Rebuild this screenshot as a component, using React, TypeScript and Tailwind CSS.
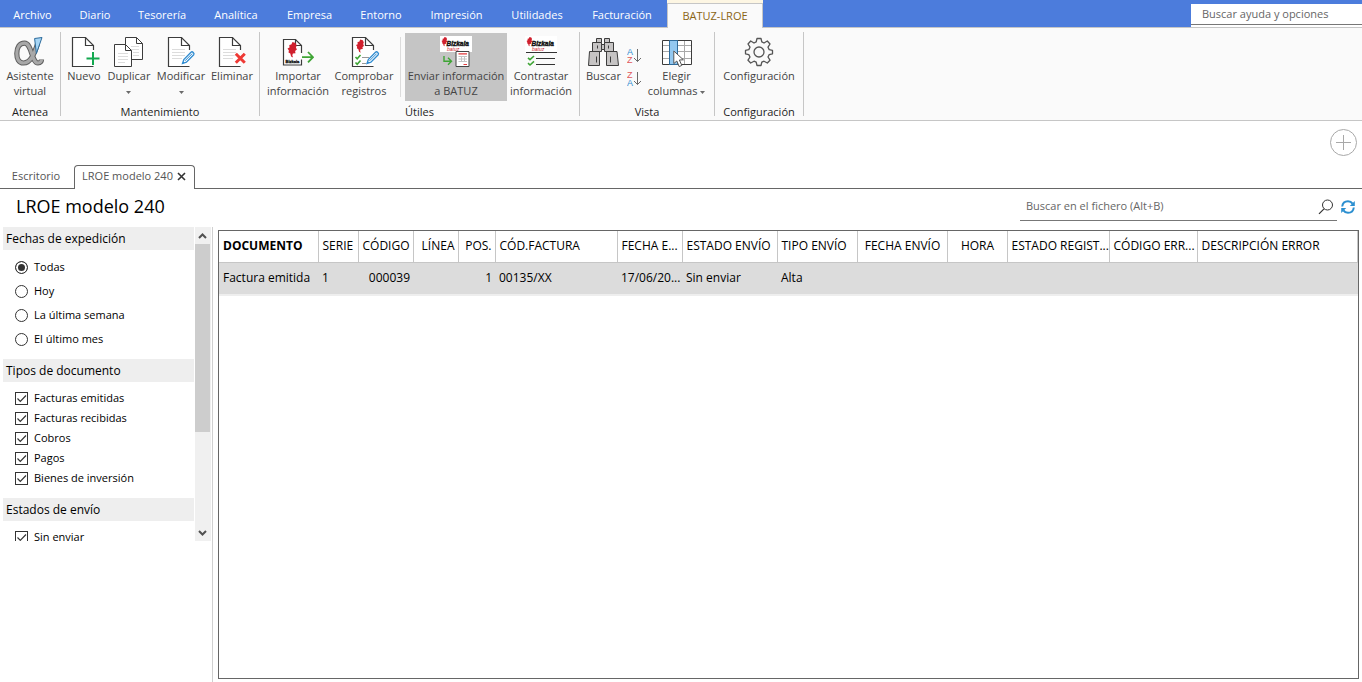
import type { ReactNode } from "react";

const menuTabs = [
  { label: "Archivo", width: "w-[65px]" },
  { label: "Diario", width: "w-[60px]" },
  { label: "Tesorería", width: "w-[74px]" },
  { label: "Analítica", width: "w-[74px]" },
  { label: "Empresa", width: "w-[73px]" },
  { label: "Entorno", width: "w-[70px]" },
  { label: "Impresión", width: "w-[81px]" },
  { label: "Utilidades", width: "w-[80px]" },
  { label: "Facturación", width: "w-[90px]" },
];

const dateFilters = ["Todas", "Hoy", "La última semana", "El último mes"];

const documentTypes = [
  "Facturas emitidas",
  "Facturas recibidas",
  "Cobros",
  "Pagos",
  "Bienes de inversión",
];

const columns = [
  { label: "DOCUMENTO", value: "Factura emitida", width: "w-[99px]", align: "text-left", bold: true },
  { label: "SERIE", value: "1", width: "w-[40px]", align: "text-left" },
  { label: "CÓDIGO", value: "000039", width: "w-[55px]", align: "text-right" },
  { label: "LÍNEA", value: "", width: "w-[45px]", align: "text-right" },
  { label: "POS.", value: "1", width: "w-[37px]", align: "text-right" },
  { label: "CÓD.FACTURA", value: "00135/XX", width: "w-[122px]", align: "text-left" },
  { label: "FECHA E...", value: "17/06/20...", width: "w-[65px]", align: "text-left" },
  { label: "ESTADO ENVÍO", value: "Sin enviar", width: "w-[95px]", align: "text-left" },
  { label: "TIPO ENVÍO", value: "Alta", width: "w-[80px]", align: "text-left" },
  { label: "FECHA ENVÍO", value: "", width: "w-[90px]", align: "text-center" },
  { label: "HORA", value: "", width: "w-[60px]", align: "text-center" },
  { label: "ESTADO REGIST...", value: "", width: "w-[102px]", align: "text-left" },
  { label: "CÓDIGO ERR...", value: "", width: "w-[88px]", align: "text-right" },
  { label: "DESCRIPCIÓN ERROR", value: "", width: "", align: "text-left" },
];

function Icon({ children }: { children: ReactNode }) {
  return (
    <svg width="32" height="32" viewBox="0 0 32 32" fill="none" className="shrink-0" aria-hidden="true">
      {children}
    </svg>
  );
}

function TextLines({ x = 8, y = 13, w = 13 }: { x?: number; y?: number; w?: number }) {
  return (
    <path
      d={`M${x} ${y + 0.5}h${w}m-${w} 3h${w}m-${w} 3h${w}m-${w} 3h${w - 3}`}
      stroke="#dcdcdc"
    />
  );
}

function Pencil({ x, y }: { x: number; y: number }) {
  return (
    <g transform={`translate(${x} ${y})`}>
      <path d="M0.5 12.5L1.8 8.6 9 1.2C10.4 0 12.8 2.2 11.7 3.8L4.4 11.2Z" fill="#fff" stroke="#2f8bd0" strokeWidth="1.3" />
      <path d="M3 9.8L10.2 2.6" stroke="#2f8bd0" />
      <path d="M0.5 12.5L1.2 10.2 2.8 11.8Z" fill="#2f8bd0" />
    </g>
  );
}

function Page({ x = 4 }: { x?: number }) {
  return (
    <g transform={`translate(${x} 0)`}>
      <path d="M21.5 30.5H0.5V1.5H13.5L21.5 9.5V14" fill="#fff" stroke="#3c3c3c" strokeWidth="1.2" />
      <path d="M13.5 1.5V9.5H21.5" stroke="#3c3c3c" strokeWidth="1.2" />
    </g>
  );
}

// Red map mark used by the Bizkaia icons
function Region({ x, y, scale = 1 }: { x: number; y: number; scale?: number }) {
  return (
    <g transform={`translate(${x} ${y}) scale(${scale})`}>
      <path
        d="M5 0L8 1 9.2 3.5 8.4 5.4 9.4 7.4 7.6 9 8 11.2 5.4 11.5 4.8 13.2 5.6 15.6 3.6 14.4 2.8 11.6 1 10.4 1.4 8.4 0 6.6 2 5.6 1.8 3 3.8 2.6Z"
        fill="#d0202e"
      />
    </g>
  );
}

function Banner() {
  return (
    <>
      <rect width="32" height="16" fill="#fff" />
      <Region x={1.5} y={1} scale={0.6} />
      <text x="6.5" y="9.5" fontSize="6.5" fontWeight="700" fontStyle="italic" fill="#111" stroke="#111" strokeWidth="0.4" fontFamily="Liberation Sans, sans-serif">
        Bizkaia
      </text>
      <text x="7" y="14.5" fontSize="5" fontStyle="italic" fill="#d0202e" fontFamily="Liberation Sans, sans-serif">
        batuz
      </text>
    </>
  );
}

function AlphaIcon() {
  const alpha = "M23.5 8C20.5 17 17 27 9.5 27C4.5 27 2.8 22.5 2.8 17.5C2.8 11.5 5.5 7.2 10.5 7.2C18 7.2 17.5 27 24 27C26.5 27 27.5 25 27.5 23.5";
  return (
    <Icon>
      <path d={alpha} stroke="#5f5f5f" strokeWidth="5.2" />
      <path d={alpha} stroke="#a8a8a8" strokeWidth="3.2" />
      <path d="M20.6 2.5L28 1.5 22.4 17.5Z" fill="#a6d5f5" stroke="#2d6c9c" />
    </Icon>
  );
}

function NewIcon() {
  return (
    <Icon>
      <Page />
      <path d="M25 16V29M18.5 22.5H31.5" stroke="#12a84f" strokeWidth="2" />
    </Icon>
  );
}

function DuplicateIcon() {
  return (
    <Icon>
      <path d="M12.5 1.5H23.5L29.5 7.5V23.5H12.5Z" fill="#fff" stroke="#3c3c3c" />
      <path d="M23.5 1.5V7.5H29.5" stroke="#3c3c3c" />
      <path d="M18 10.5H26M18 13.5H26M20 16.5H26M20 19.5H26" stroke="#dcdcdc" />
      <path d="M1.5 8.5H12.5L18.5 14.5V30.5H1.5Z" fill="#fff" stroke="#3c3c3c" />
      <path d="M12.5 8.5V14.5H18.5" stroke="#3c3c3c" />
      <TextLines x={5} y={17} w={10} />
    </Icon>
  );
}

function EditIcon() {
  return (
    <Icon>
      <Page x={3} />
      <TextLines x={7} />
      <Pencil x={17} y={15} />
    </Icon>
  );
}

function DeleteIcon() {
  return (
    <Icon>
      <Page x={3} />
      <TextLines x={7} />
      <path d="M19.5 17.5L29 27M29 17.5L19.5 27" stroke="#fff" strokeWidth="4" />
      <path d="M19.8 17.8L28.8 26.8M28.8 17.8L19.8 26.8" stroke="#ee3a35" strokeWidth="3" />
    </Icon>
  );
}

function ImportIcon() {
  return (
    <Icon>
      <path d="M19.5 23.5V29H1.5V3.5H13.5L19.5 9.5V17" fill="#fff" stroke="#3c3c3c" strokeWidth="1.2" />
      <path d="M13.5 3.5V9.5H19.5" stroke="#3c3c3c" strokeWidth="1.2" />
      <Region x={5.5} y={6} />
      <text x="3.5" y="26.5" fontSize="4" fontWeight="700" fill="#111" stroke="#111" strokeWidth="0.3" fontFamily="Liberation Sans, sans-serif">
        Bizkaia
      </text>
      <path d="M20 21.2H31M26 16L31 21.2L26 26.4" stroke="#3fa535" strokeWidth="1.8" />
    </Icon>
  );
}

function CheckIcon() {
  return (
    <Icon>
      <Page />
      <Region x={8} y={3.5} scale={0.85} />
      <path d="M7.5 21L9.2 22.8 12.5 19M7.5 26.5L9.2 28.3 12.5 24.5" stroke="#3fa535" strokeWidth="1.6" />
      <path d="M14 21.5H21M14 27.5H18" stroke="#999" />
      <Pencil x={18.5} y={15} />
    </Icon>
  );
}

function SendIcon() {
  return (
    <Icon>
      <Banner />
      <path d="M4 20V25.3H11M8 21.8L11.5 25.3L8 28.8" stroke="#3fa535" strokeWidth="1.4" />
      <path d="M16 15.5H29V30.5H16Z" fill="#fff" stroke="#444" />
      <path d="M18.5 17.8H27M23.5 28.5H27" stroke="#e2383a" strokeWidth="1.2" />
      <path d="M18.5 20.5H27M18.5 23H27M18.5 25.5H27M21.5 20V26M24.5 20V26" stroke="#c4c4c4" />
    </Icon>
  );
}

function ContrastIcon() {
  return (
    <Icon>
      <Banner />
      <path d="M1 16.5H32M11 22.5H30M11 28.5H30" stroke="#333" />
      <path d="M3 21.8L5 23.6 9 20M3 27.2L5 29 9 25.4" stroke="#3fa535" strokeWidth="1.6" />
    </Icon>
  );
}

function BinocularsIcon() {
  return (
    <Icon>
      <g fill="#c6c4c4" stroke="#3c3c3c">
        <path d="M8.5 2.5H13.5V6.5H8.5ZM16.5 2.5H21.5V6.5H16.5Z" />
        <path d="M4.5 6.5H13.5V15.5H4.5ZM16.5 6.5H25.5V15.5H16.5Z" />
        <path d="M13.5 8.5H16.5V13.5H13.5Z" />
        <path d="M1.5 15.5H11.5V29.5H0.5ZM18.5 15.5H29L30.5 29.5H18.5Z" />
        <path d="M8.5 20.5V26.5M22.5 20.5V26.5M9.5 9.5V12.5M20.5 9.5V12.5" />
      </g>
    </Icon>
  );
}

function ColumnsIcon() {
  return (
    <Icon>
      <path d="M1.5 4.5H30.5V28.5H1.5Z" fill="#fff" />
      <path d="M1 9.5H31M1 15.5H31M1 22.5H31M23.5 4V29" stroke="#a9a9a9" />
      <path d="M1.5 4.5H30.5V28.5H1.5Z" stroke="#3c3c3c" />
      <path d="M8.5 4.5H16.5V28.5H8.5Z" fill="#93c8f0" stroke="#2f6c9c" />
      <path d="M12.8 15V27.6L15.8 25 18.2 30.6 20.8 29.4 18.4 24 22.4 23.8Z" fill="#fff" stroke="#555" />
    </Icon>
  );
}

function GearIcon() {
  return (
    <Icon>
      <path
        d="M13.2 5.9L14 2.5H18L18.8 5.9L21 7L24.3 5L27 8L25 11.2L26.2 13.6L29.5 14.4V17.8L26.2 18.6L25 21L27 24.2L24.3 27L21 25.2L18.8 26.2L18 29.5H14L13.2 26.2L11 25.2L7.7 27L5 24.2L7 21L5.8 18.6L2.5 17.8V14.4L5.8 13.6L7 11.2L5 8L7.7 5L11 7Z"
        stroke="#555"
        strokeWidth="1.3"
        strokeLinejoin="round"
      />
      <circle cx="16" cy="16" r="5" stroke="#555" strokeWidth="1.3" />
    </Icon>
  );
}

function SortIcon({ first, second, firstColor, secondColor }: { first: string; second: string; firstColor: string; secondColor: string }) {
  return (
    <svg width="16" height="17" viewBox="0 0 16 17" fill="none" aria-hidden="true">
      <g fontFamily="Liberation Sans, sans-serif" fontSize="9">
        <text x="0" y="8" fill={firstColor}>{first}</text>
        <text x="0" y="16" fill={secondColor}>{second}</text>
      </g>
      <path d="M10.5 2V14.5M7 11L10.5 14.5L14 11" stroke="#6a6a6a" />
    </svg>
  );
}

function Caret() {
  return (
    <svg width="5" height="3" viewBox="0 0 5 3" className="inline-block align-middle" aria-hidden="true">
      <path d="M0 0H5L2.5 3Z" fill="#6a6a6a" />
    </svg>
  );
}

interface RibbonButtonProps {
  icon: ReactNode;
  width: string;
  active?: boolean;
  children: ReactNode;
}

function RibbonButton({ icon, width, active, children }: RibbonButtonProps) {
  return (
    <button
      type="button"
      className={`flex h-[68px] shrink-0 flex-col items-center pt-[3px] whitespace-nowrap text-[#444] ${width} ${
        active ? "bg-[#c5c5c5]" : ""
      }`}
    >
      {icon}
      <span className="block text-center leading-[15px]">{children}</span>
    </button>
  );
}

function RibbonGroup({ label, children }: { label: string; children: ReactNode }) {
  return (
    <section className="my-1 flex shrink-0 flex-col border-r border-[#c6c6c6]">
      <div className="flex pt-px">{children}</div>
      <h2 className="mt-[3px] text-center leading-[15px] text-[#1e1e1e]">{label}</h2>
    </section>
  );
}

function FilterHeading({ children }: { children: ReactNode }) {
  return <legend className="block h-[23px] w-full bg-[#eee] pl-[3px] text-[12px] leading-[23px]">{children}</legend>;
}

function CheckOption({ label }: { label: string }) {
  return (
    <label className="flex h-5 items-center gap-1.5">
      <span className="relative flex size-[13px]">
        <input type="checkbox" defaultChecked className="size-[13px] appearance-none border border-[#333] bg-white" />
        <svg viewBox="0 0 13 13" fill="none" className="pointer-events-none absolute inset-0" aria-hidden="true">
          <path d="M2.5 6.5L5.3 9.3L11 3.5" stroke="#333" strokeWidth="1.2" />
        </svg>
      </span>
      {label}
    </label>
  );
}

function Ribbon() {
  return (
    <div className="flex h-[93px] border-b border-[#c6c6c6] bg-[#fafafa]">
      <RibbonGroup label="Atenea">
        <RibbonButton icon={<AlphaIcon />} width="w-[60px]">
          Asistente
          <br />
          virtual
        </RibbonButton>
      </RibbonGroup>
      <RibbonGroup label="Mantenimiento">
        <div className="flex pr-1.5">
          <RibbonButton icon={<NewIcon />} width="w-[46px]">
            Nuevo
          </RibbonButton>
          <RibbonButton icon={<DuplicateIcon />} width="w-[44px]">
            Duplicar
            <br />
            <Caret />
          </RibbonButton>
          <RibbonButton icon={<EditIcon />} width="w-[60px]">
            Modificar
            <br />
            <Caret />
          </RibbonButton>
          <RibbonButton icon={<DeleteIcon />} width="w-[42px]">
            Eliminar
          </RibbonButton>
        </div>
      </RibbonGroup>
      <RibbonGroup label="Útiles">
        <div className="flex pr-1 pl-1">
          <RibbonButton icon={<ImportIcon />} width="w-[68px]">
            Importar
            <br />
            información
          </RibbonButton>
          <RibbonButton icon={<CheckIcon />} width="w-[64px]">
            Comprobar
            <br />
            registros
          </RibbonButton>
          <div className="mx-1 my-1 w-px bg-[#dcdcdc]" />
          <RibbonButton icon={<SendIcon />} width="w-[102px]" active>
            Enviar información
            <br />a BATUZ
          </RibbonButton>
          <RibbonButton icon={<ContrastIcon />} width="w-[68px]">
            Contrastar
            <br />
            información
          </RibbonButton>
        </div>
      </RibbonGroup>
      <RibbonGroup label="Vista">
        <RibbonButton icon={<BinocularsIcon />} width="w-[47px]">
          Buscar
        </RibbonButton>
        <div className="flex w-4 flex-col gap-1.5 pt-3.5">
          <button type="button" aria-label="Orden ascendente">
            <SortIcon first="A" second="Z" firstColor="#2f8bd0" secondColor="#e0575b" />
          </button>
          <button type="button" aria-label="Orden descendente">
            <SortIcon first="Z" second="A" firstColor="#e0575b" secondColor="#2f8bd0" />
          </button>
        </div>
        <div className="pr-1">
          <RibbonButton icon={<ColumnsIcon />} width="w-[67px]">
            Elegir
            <br />
            columnas <Caret />
          </RibbonButton>
        </div>
      </RibbonGroup>
      <RibbonGroup label="Configuración">
        <RibbonButton icon={<GearIcon />} width="w-[88px]">
          Configuración
        </RibbonButton>
      </RibbonGroup>
    </div>
  );
}

function FilterPanel() {
  return (
    <aside className="w-[213px] shrink-0 border-r border-[#d0d0d0]">
      <div className="flex h-[314px] overflow-hidden">
        <form className="w-[194px] pl-[3px]">
          <fieldset>
            <FilterHeading>Fechas de expedición</FilterHeading>
            <div className="pt-[5px] pb-2 pl-3">
              {dateFilters.map((name, index) => (
                <label key={name} className="flex h-6 items-center gap-1.5">
                  <input
                    type="radio"
                    name="fecha"
                    defaultChecked={index === 0}
                    className="size-[13px] appearance-none rounded-full border border-[#333] bg-white checked:bg-[#333] checked:shadow-[inset_0_0_0_2px_#fff]"
                  />
                  {name}
                </label>
              ))}
            </div>
          </fieldset>
          <fieldset>
            <FilterHeading>Tipos de documento</FilterHeading>
            <div className="pt-1.5 pb-2.5 pl-3">
              {documentTypes.map((name) => (
                <CheckOption key={name} label={name} />
              ))}
            </div>
          </fieldset>
          <fieldset>
            <FilterHeading>Estados de envío</FilterHeading>
            <div className="pt-1.5 pl-3">
              <CheckOption label="Sin enviar" />
            </div>
          </fieldset>
        </form>
        <div className="ml-px flex w-4 flex-col bg-[#f0f0f0] pr-px">
          <button type="button" aria-label="Subir" className="flex h-[17px] items-center justify-center">
            <svg width="9" height="6" viewBox="0 0 9 6" fill="none" aria-hidden="true">
              <path d="M1 5L4.5 1.5L8 5" stroke="#505050" strokeWidth="2" />
            </svg>
          </button>
          <div className="h-[188px] bg-[#cdcdcd]" />
          <button type="button" aria-label="Bajar" className="mt-auto flex h-[17px] items-center justify-center">
            <svg width="9" height="6" viewBox="0 0 9 6" fill="none" aria-hidden="true">
              <path d="M1 1L4.5 4.5L8 1" stroke="#505050" strokeWidth="2" />
            </svg>
          </button>
        </div>
      </div>
    </aside>
  );
}

function RecordsTable() {
  return (
    <div className="mt-[3px] mr-[3px] mb-[3px] ml-[5px] min-w-0 flex-1 border border-[#666]">
      <table className="w-full table-fixed border-collapse text-[12px]">
        <thead>
          <tr className="h-[31px] border-b border-[#c6c6c6]">
            {columns.map((column) => (
              <th
                key={column.label}
                className={`border-r border-[#c6c6c6] pr-[3px] pl-1 whitespace-nowrap ${column.width} ${column.align} ${
                  column.bold ? "font-bold" : "font-normal"
                }`}
              >
                {column.label}
              </th>
            ))}
          </tr>
        </thead>
        <tbody>
          <tr className="h-[33px] border-b-2 border-[#eee] bg-[#dcdcdc]">
            {columns.map((column) => (
              <td key={column.label} className={`pr-[3px] pl-1 whitespace-nowrap ${column.align}`}>
                {column.value}
              </td>
            ))}
          </tr>
        </tbody>
      </table>
    </div>
  );
}

export default function App() {
  return (
    <div className="flex min-h-screen flex-col bg-white font-['Open_Sans','Noto_Sans',sans-serif] text-[11px] text-black">
      <header className="flex h-7 border-b border-[#c6c6c6] bg-[#4c7cdc]">
        <nav className="flex">
          {menuTabs.map((tab) => (
            <a
              key={tab.label}
              href="#"
              className={`flex shrink-0 items-center justify-center pt-1 text-white ${tab.width}`}
            >
              {tab.label}
            </a>
          ))}
          <a href="#" className="-mb-px flex w-24 shrink-0 border-t-[3px] border-[#fdf6e3] text-[#8a6414]">
            <span className="flex flex-1 items-center justify-center border border-b-0 border-[#c6c6c6] bg-[#fafafa]">
              BATUZ-LROE
            </span>
          </a>
        </nav>
        <div className="ml-auto w-[171px] bg-white">
          <div className="h-1 bg-[#4c7cdc]" />
          <input
            aria-label="Buscar ayuda y opciones"
            placeholder="Buscar ayuda y opciones"
            className="block h-[21px] w-full border-b border-[#777] pb-0.5 pl-[11px] outline-none placeholder:text-[#666]"
          />
        </div>
      </header>

      <Ribbon />

      <div className="flex h-11 justify-end pt-2 pr-[5px]">
        <button type="button" aria-label="Añadir" className="size-7">
          <svg width="28" height="28" viewBox="0 0 28 28" fill="none" stroke="#a8a8a8" aria-hidden="true">
            <circle cx="14.5" cy="13.5" r="13" />
            <path d="M7 13.5H22M14.5 6V21" />
          </svg>
        </button>
      </div>

      <div className="flex h-6 items-end">
        <a href="#" className="flex h-6 w-[74px] items-center justify-center border-b border-[#666] pr-0.5 text-[#555]">
          Escritorio
        </a>
        <div className="flex h-6 w-[121px] items-center justify-center gap-1 rounded-t border border-b-0 border-[#666] pr-px pb-0.5 text-[#555]">
          LROE modelo 240
          <button type="button" aria-label="Cerrar">
            <svg width="9" height="9" viewBox="0 0 9 9" fill="none" stroke="#333" strokeWidth="1.6" aria-hidden="true">
              <path d="M1 1L8 8M8 1L1 8" />
            </svg>
          </button>
        </div>
        <div className="h-6 flex-1 border-b border-[#666]" />
      </div>

      <div className="flex h-[38px] justify-between pl-4">
        <h1 className="text-[18px] leading-[35px]">LROE modelo 240</h1>
        <div className="flex items-start">
          <label className="flex h-8 w-[317px] items-center border-b border-[#777] pt-1">
            <input
              aria-label="Buscar en el fichero"
              placeholder="Buscar en el fichero (Alt+B)"
              className="min-w-0 flex-1 pl-1.5 outline-none placeholder:text-[#666]"
            />
            <svg width="16" height="16" viewBox="0 0 16 16" fill="none" stroke="#333" className="mr-[3px]" aria-hidden="true">
              <circle cx="9.5" cy="6" r="5" />
              <path d="M6 9.8L1 14.8" strokeWidth="1.2" />
            </svg>
          </label>
          <button type="button" aria-label="Actualizar" className="mt-[11px] mr-[7px] ml-1">
            <svg width="14" height="14" viewBox="0 0 14 14" fill="none" aria-hidden="true">
              <path d="M1.2 6.5C1.6 3 4 1.2 7 1.2C9 1.2 10.5 2 11.6 3.6M12.8 7.5C12.4 11 10 12.8 7 12.8C5 12.8 3.5 12 2.4 10.4" stroke="#2b8fd0" strokeWidth="2" />
              <path d="M13.8 1V6H8.8ZM0.2 13V8H5.2Z" fill="#2b8fd0" />
            </svg>
          </button>
        </div>
      </div>

      <main className="flex flex-1">
        <FilterPanel />
        <RecordsTable />
      </main>
    </div>
  );
}
